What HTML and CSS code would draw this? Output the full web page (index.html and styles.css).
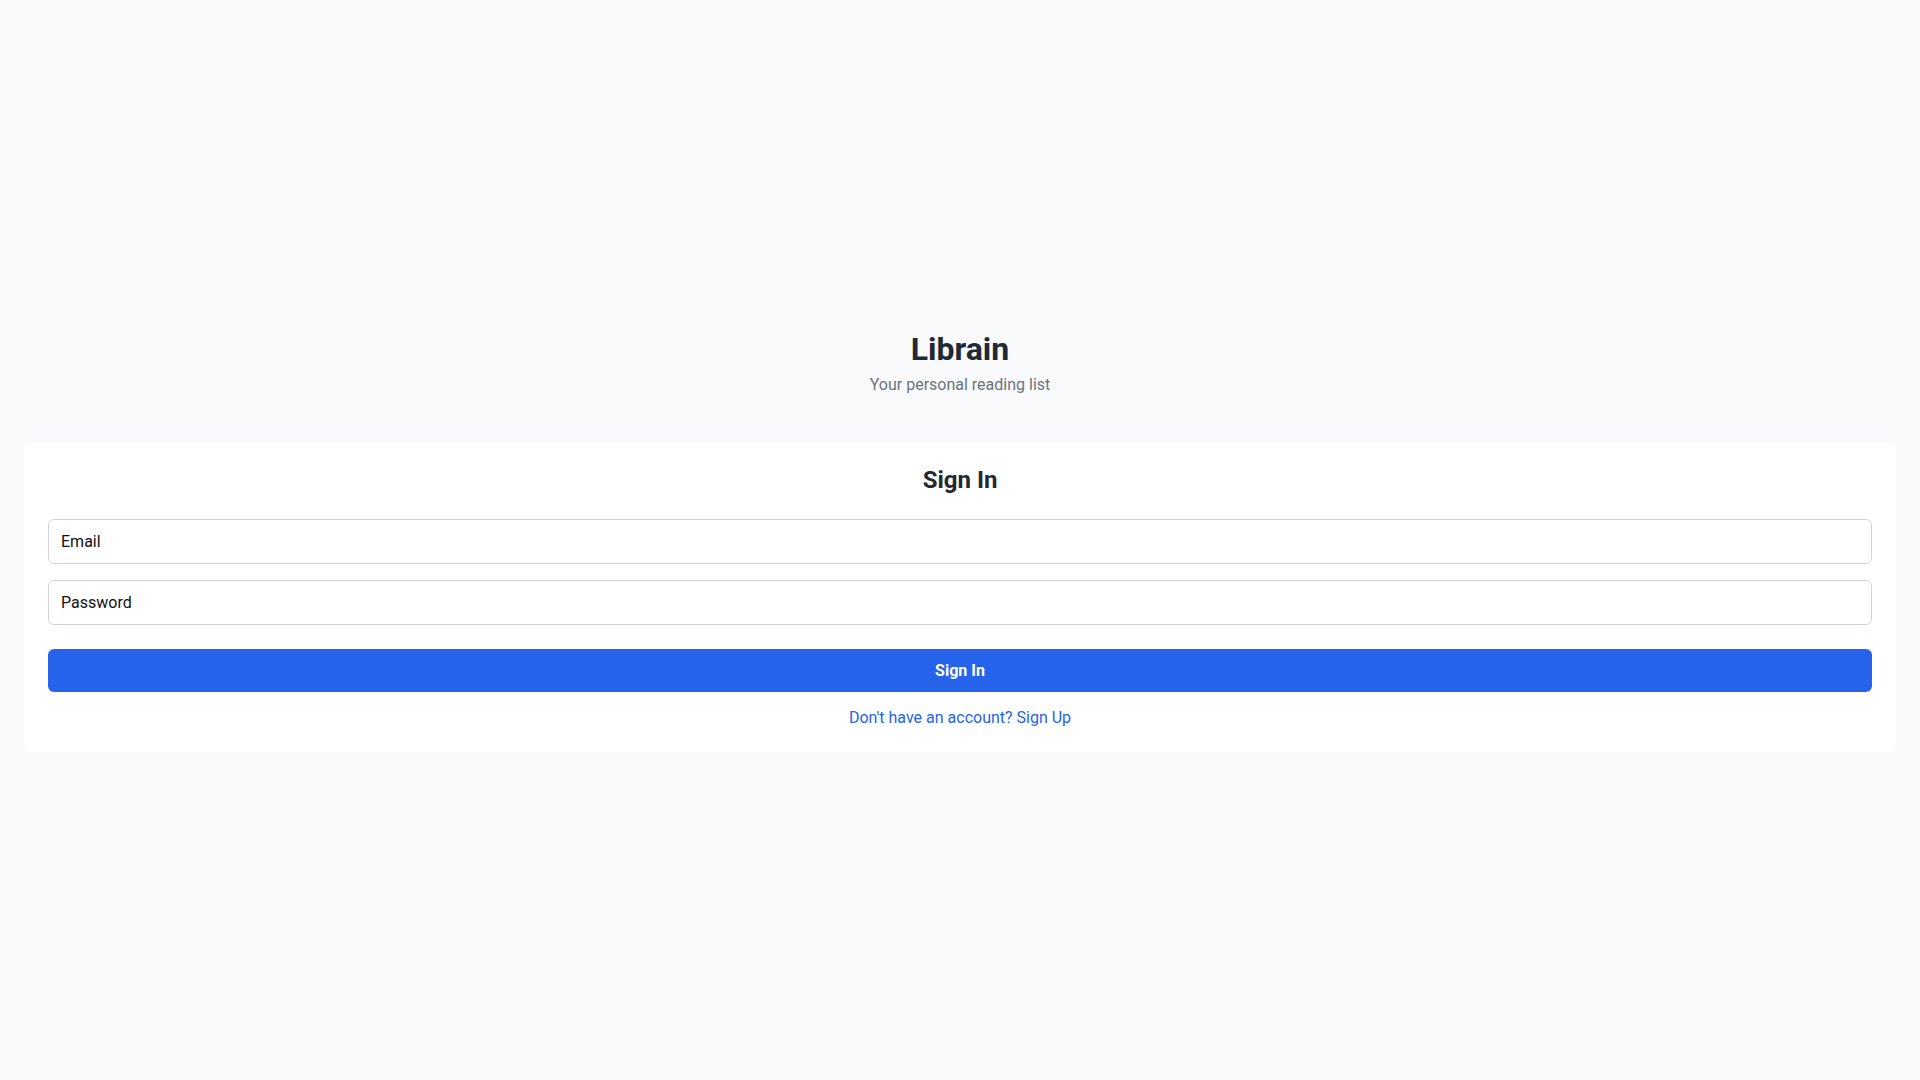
FILE: index.html
```html
<!DOCTYPE html>
<html lang="en">
<head>
<meta charset="utf-8">
<title>Librain – Sign In</title>
<link rel="stylesheet" href="styles.css">
</head>
<body>
<main class="page">
  <header class="brand">
    <h1 class="brand-title">Librain</h1>
    <p class="brand-subtitle">Your personal reading list</p>
  </header>
  <section class="card">
    <h2 class="card-title">Sign In</h2>
    <form class="form">
      <input class="field" type="email" placeholder="Email">
      <input class="field" type="password" placeholder="Password">
      <button class="btn" type="button">Sign In</button>
    </form>
    <p class="switch"><a class="switch-link" href="#">Don't have an account? Sign Up</a></p>
  </section>
</main>
</body>
</html>
```

FILE: styles.css
```css
* { box-sizing: border-box; }
html, body { margin: 0; padding: 0; }
body {
  background: #f9fafb;
  font-family: Roboto, "Liberation Sans", Arial, sans-serif;
  color: #1f2937;
}
.page {
  min-height: 100vh;
  display: flex;
  flex-direction: column;
  justify-content: center;
  padding: 0 24px;
}
.brand { text-align: center; margin-bottom: 46px; }
.brand-title {
  margin: 0;
  font-size: 32px;
  line-height: 42px;
  font-weight: 700;
  color: #1f2937;
}
.brand-subtitle {
  margin: 3px 0 0;
  font-size: 16px;
  line-height: 24px;
  color: #6b7280;
}
.card {
  background: #ffffff;
  border-radius: 8px;
  padding: 24px;
}
.card-title {
  margin: 0 0 26px;
  text-align: center;
  font-size: 24px;
  line-height: 26px;
  font-weight: 700;
  color: #1f2937;
}
.form { display: flex; flex-direction: column; }
.field {
  border: 1px solid #d1d5db;
  border-radius: 6px;
  padding: 12px;
  font-family: inherit;
  font-size: 16px;
  line-height: normal;
  color: #111827;
  background: #fff;
  outline: none;
}
.field + .field { margin-top: 16px; }
.field::placeholder { color: #111111; opacity: 1; }
.btn {
  margin-top: 24px;
  padding: 12px;
  border: 0;
  border-radius: 6px;
  background: #2563eb;
  color: #fff;
  font-family: inherit;
  font-size: 16px;
  line-height: normal;
  font-weight: 700;
  cursor: pointer;
}
.switch {
  margin: 16px 0 0;
  text-align: center;
  font-size: 16px;
  line-height: 20px;
}
.switch-link { color: #2563eb; text-decoration: none; }
```
